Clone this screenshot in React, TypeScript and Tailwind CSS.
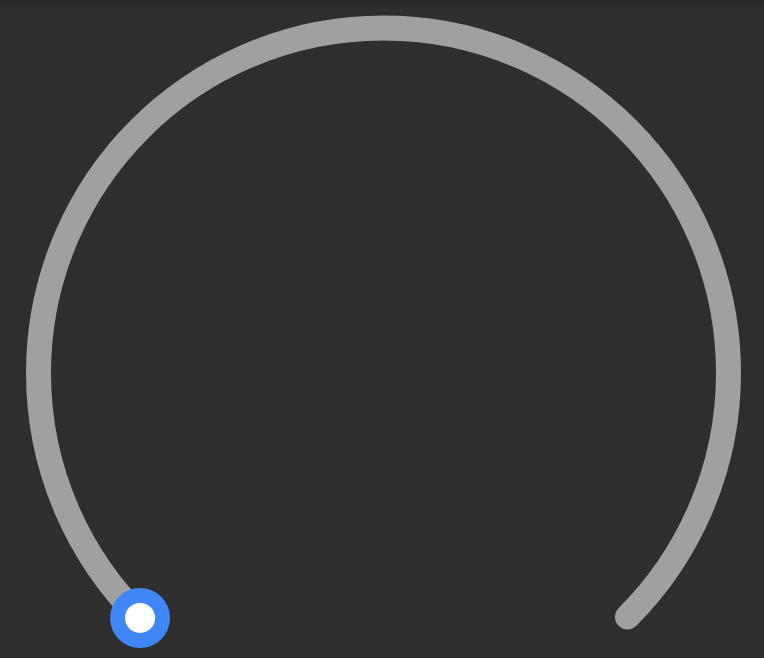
import React from 'react';

const App = () => {
  const cx = 383.5;
  const cy = 373;
  const r = 345;
  const d = r * Math.SQRT1_2;
  const start = { x: cx - d, y: cy + d };
  const end = { x: cx + d, y: cy + d };

  return (
    <div className="w-[764px] h-[658px] flex flex-col bg-[#2e2e2e] overflow-hidden">
      {/* top strip */}
      <div className="h-[7px] shrink-0 bg-[#272727]" />

      {/* dial */}
      <svg width="764" height="651" viewBox="0 7 764 651" className="block">
        <path
          d={`M ${start.x} ${start.y} A ${r} ${r} 0 1 1 ${end.x} ${end.y}`}
          fill="none"
          stroke="#a0a0a0"
          strokeWidth="25"
          strokeLinecap="round"
        />
        <circle cx={start.x + 0.5} cy={start.y + 1} r="30" fill="#3f86f7" />
        <circle cx={start.x + 0.5} cy={start.y + 1} r="15" fill="#ffffff" />
      </svg>
    </div>
  );
};

export default App;
